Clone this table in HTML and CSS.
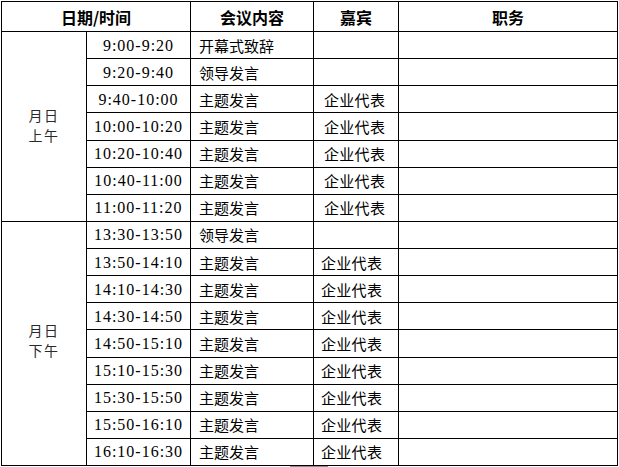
FILE: index.html
```html
<!DOCTYPE html>
<html lang="zh-CN">
<head>
<meta charset="utf-8">
<title>会议议程</title>
<link rel="stylesheet" href="styles.css">
</head>
<body>
<div class="sheet">
  <div class="cell head span2">日期/时间</div>
  <div class="cell head">会议内容</div>
  <div class="cell head">嘉宾</div>
  <div class="cell head">职务</div>

  <div class="cell day am">月日<br>上午</div>
  <div class="cell day pm">月日<br>下午</div>

  <div class="cell time">9:00-9:20</div><div class="cell topic">开幕式致辞</div><div class="cell guest"></div><div class="cell"></div>
  <div class="cell time">9:20-9:40</div><div class="cell topic">领导发言</div><div class="cell guest"></div><div class="cell"></div>
  <div class="cell time">9:40-10:00</div><div class="cell topic">主题发言</div><div class="cell guest">企业代表</div><div class="cell"></div>
  <div class="cell time">10:00-10:20</div><div class="cell topic">主题发言</div><div class="cell guest">企业代表</div><div class="cell"></div>
  <div class="cell time">10:20-10:40</div><div class="cell topic">主题发言</div><div class="cell guest">企业代表</div><div class="cell"></div>
  <div class="cell time">10:40-11:00</div><div class="cell topic">主题发言</div><div class="cell guest">企业代表</div><div class="cell"></div>
  <div class="cell time">11:00-11:20</div><div class="cell topic">主题发言</div><div class="cell guest">企业代表</div><div class="cell"></div>

  <div class="cell time">13:30-13:50</div><div class="cell topic">领导发言</div><div class="cell guest pmg"></div><div class="cell"></div>
  <div class="cell time">13:50-14:10</div><div class="cell topic">主题发言</div><div class="cell guest pmg">企业代表</div><div class="cell"></div>
  <div class="cell time">14:10-14:30</div><div class="cell topic">主题发言</div><div class="cell guest pmg">企业代表</div><div class="cell"></div>
  <div class="cell time">14:30-14:50</div><div class="cell topic">主题发言</div><div class="cell guest pmg">企业代表</div><div class="cell"></div>
  <div class="cell time">14:50-15:10</div><div class="cell topic">主题发言</div><div class="cell guest pmg">企业代表</div><div class="cell"></div>
  <div class="cell time">15:10-15:30</div><div class="cell topic">主题发言</div><div class="cell guest pmg">企业代表</div><div class="cell"></div>
  <div class="cell time">15:30-15:50</div><div class="cell topic">主题发言</div><div class="cell guest pmg">企业代表</div><div class="cell"></div>
  <div class="cell time">15:50-16:10</div><div class="cell topic">主题发言</div><div class="cell guest pmg">企业代表</div><div class="cell"></div>
  <div class="cell time">16:10-16:30</div><div class="cell topic">主题发言</div><div class="cell guest pmg">企业代表</div><div class="cell"></div>
</div>
<div class="bar"></div>
</body>
</html>
```

FILE: styles.css
```css
html, body {
  margin: 0;
  padding: 0;
  background: #ffffff;
}

body {
  font-family: "Noto Sans CJK SC", "Noto Sans", sans-serif;
  color: #000;
}

.sheet {
  margin: 1px 0 0 1px;
  width: 617px;
  height: 465px;
  box-sizing: border-box;
  padding: 1px;
  background: #000;
  display: grid;
  grid-template-columns: 84px 103px 122px 84px 218px;
  grid-template-rows: 29px repeat(16, 1fr);
  gap: 1px;
}

.cell {
  background: #fff;
  display: flex;
  align-items: center;
  font-size: 15px;
  line-height: 1;
  white-space: nowrap;
}

.head {
  justify-content: center;
  font-weight: 700;
  font-size: 16px;
  padding-top: 1px;
}

.span2 {
  grid-column: span 2;
}

.day {
  grid-column: 1;
  justify-content: center;
  text-align: center;
  font-size: 14px;
  line-height: 20px;
  letter-spacing: 1.5px;
  color: #2a2a2a;
}

.am {
  grid-row: 2 / span 7;
  padding-bottom: 3px;
}

.pm {
  grid-row: 9 / span 9;
  padding-bottom: 6px;
}

.time {
  justify-content: center;
  font-family: "Liberation Serif", serif;
  font-size: 16px;
  letter-spacing: 1px;
  padding-top: 1px;
}

.topic {
  padding-left: 8px;
}

.guest {
  padding-left: 10px;
  letter-spacing: 0.3px;
}

.guest.pmg {
  padding-left: 7px;
}

.bar {
  margin: 0 0 0 290px;
  width: 38px;
  height: 2px;
  background: #8c8c8c;
}
```
